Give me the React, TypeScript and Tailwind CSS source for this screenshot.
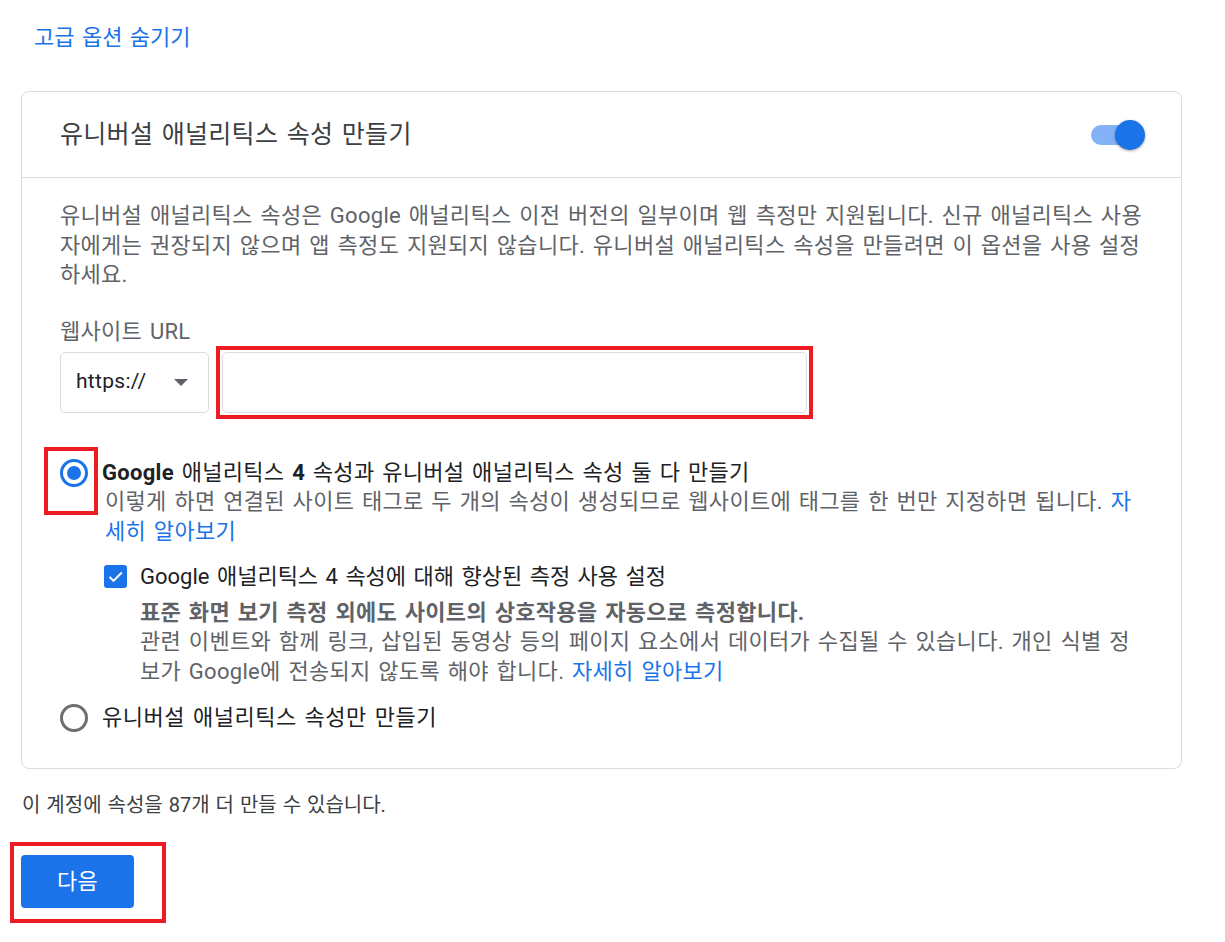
const FONT = 'font-[Roboto,"Noto_Sans_CJK_KR",sans-serif]'

function Radio({ checked }: { checked: boolean }) {
  if (checked) {
    return (
      <span className="flex h-[28px] w-[28px] shrink-0 items-center justify-center rounded-full border-[3px] border-[#1a73e8]">
        <span className="h-[14px] w-[14px] rounded-full bg-[#1a73e8]" />
      </span>
    )
  }
  return <span className="h-[28px] w-[28px] shrink-0 rounded-full border-[3px] border-[#6d6f72]" />
}

export default function App() {
  return (
    <div className={`${FONT} h-[942px] w-full bg-white tracking-[0.3px] [word-spacing:2px]`}>
      <div className="pl-[34px] pt-[24px]">
        <a className="text-[22px] leading-[28px] tracking-normal text-[#1a73e8]">고급 옵션 숨기기</a>
      </div>

      <div className="ml-[21px] mt-[39px] w-[1161px] rounded-[8px] border border-[#dadce0]">
        <div className="flex h-[86px] items-center justify-between border-b border-[#dadce0] pl-[38px] pr-[36px]">
          <h2 className="text-[25px] text-[#3c4043]">유니버설 애널리틱스 속성 만들기</h2>
          <span className="relative flex h-[30px] w-[54px] items-center">
            <span className="h-[20px] w-[48px] rounded-full bg-[#83b3f6]" />
            <span className="absolute right-0 top-0 h-[30px] w-[30px] rounded-full bg-[#1a73e8] shadow-[0_1px_3px_rgba(0,0,0,0.35)]" />
          </span>
        </div>

        <div className="px-[38px] pb-[35px] pt-[23px]">
          <p className="whitespace-nowrap text-[22px] leading-[29.5px] text-[#5f6368]">
            유니버설 애널리틱스 속성은 Google 애널리틱스 이전 버전의 일부이며 웹 측정만 지원됩니다. 신규 애널리틱스 사용
            <br />
            자에게는 권장되지 않으며 앱 측정도 지원되지 않습니다. 유니버설 애널리틱스 속성을 만들려면 이 옵션을 사용 설정
            <br />
            하세요.
          </p>

          <div className="mt-[27px] text-[22px] leading-[29px] text-[#5f6368]">웹사이트 URL</div>

          <div className="mt-[6px] flex gap-[13px]">
            <div className="flex h-[61px] w-[149px] items-center justify-between rounded-[5px] border border-[#dadce0] pl-[15px] pr-[20px]">
              <span className="text-[21px] text-[#202124]">https://</span>
              <span className="h-0 w-0 border-x-[7px] border-t-[7px] border-x-transparent border-t-[#5f6368]" />
            </div>
            <div className="relative h-[61px] w-[585px] rounded-[5px] border border-[#dadce0]">
              <span className="absolute -inset-[7px] border-4 border-[#ed1c24]" />
            </div>
          </div>

          <div className="mt-[45px] flex items-start gap-[14px]">
            <div className="relative mt-[1px]">
              <span className="absolute left-[-16px] top-[-12px] h-[68px] w-[54px] border-4 border-[#ed1c24]" />
              <Radio checked />
            </div>
            <div className="text-[22px] leading-[29.5px]">
              <div className="whitespace-nowrap text-[#202124]">
                <b>Google</b> 애널리틱스 <b>4</b> 속성과 유니버설 애널리틱스 속성 둘 다 만들기
              </div>
              <div className="whitespace-nowrap pl-[3px] text-[#5f6368]">
                이렇게 하면 연결된 사이트 태그로 두 개의 속성이 생성되므로 웹사이트에 태그를 한 번만 지정하면 됩니다. <a className="text-[#1a73e8]">자</a>
                <br />
                <a className="text-[#1a73e8]">세히 알아보기</a>
              </div>

              <div className="mt-[16px] flex items-start gap-[13px] pl-[2px]">
                <span className="mt-[3px] flex h-[23px] w-[23px] shrink-0 items-center justify-center rounded-[3px] bg-[#1a73e8]">
                  <svg viewBox="0 0 24 24" className="h-[19px] w-[19px]" fill="none" stroke="white" strokeWidth="2.6">
                    <path d="M4.5 12.5l5 5L20 7" />
                  </svg>
                </span>
                <div className="whitespace-nowrap">
                  <div className="tracking-normal text-[#202124]">Google 애널리틱스 4 속성에 대해 향상된 측정 사용 설정</div>
                  <div className="mt-[6px] font-bold text-[#5f6368]">표준 화면 보기 측정 외에도 사이트의 상호작용을 자동으로 측정합니다.</div>
                  <div className="text-[#5f6368]">
                    관련 이벤트와 함께 링크, 삽입된 동영상 등의 페이지 요소에서 데이터가 수집될 수 있습니다. 개인 식별 정
                    <br />
                    보가 Google에 전송되지 않도록 해야 합니다. <a className="text-[#1a73e8]">자세히 알아보기</a>
                  </div>
                </div>
              </div>
            </div>
          </div>

          <div className="mt-[17px] flex items-center gap-[14px]">
            <Radio checked={false} />
            <span className="text-[22px] leading-[29.5px] tracking-[0.5px] text-[#202124]">유니버설 애널리틱스 속성만 만들기</span>
          </div>
        </div>
      </div>

      <div className="pl-[22px] pt-[22px] text-[20px] leading-[28px] tracking-normal text-[#3c4043] [word-spacing:1px]">
        이 계정에 속성을 87개 더 만들 수 있습니다.
      </div>

      <div className="pl-[21px] pt-[36px]">
        <div className="relative inline-block">
          <span className="absolute left-[-11px] top-[-13px] h-[81px] w-[156px] border-4 border-[#ed1c24]" />
          <button className="h-[53px] w-[113px] rounded-[4px] bg-[#1a73e8] text-[22px] text-white">다음</button>
        </div>
      </div>
    </div>
  )
}
